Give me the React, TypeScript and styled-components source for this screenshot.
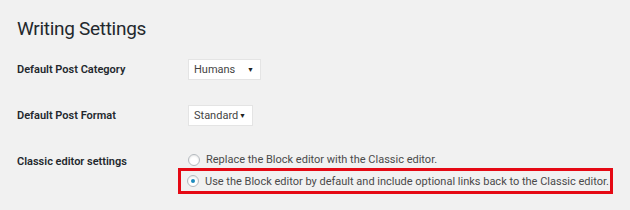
import React from "react";
import styled, { createGlobalStyle } from "styled-components";

const Global = createGlobalStyle`
  html, body { margin: 0; padding: 0; background: #f1f1f1; }
  body { font-family: Roboto, "Open Sans", sans-serif; color: #23282d; }
`;

const Page = styled.div`
  width: 630px;
  height: 210px;
  padding: 16px 0 0 17px;
  box-sizing: border-box;
  overflow: hidden;
`;

const Title = styled.h1`
  margin: 0 0 17px 0;
  font-family: Roboto, sans-serif;
  font-size: 19px;
  font-weight: 400;
  letter-spacing: -0.3px;
  line-height: 26px;
  color: #23282d;
`;

const Form = styled.div`
  display: grid;
  grid-template-columns: 171px 1fr;
  row-gap: 25px;
  align-items: start;
`;

const Label = styled.div`
  font-size: 11px;
  font-weight: 600;
  line-height: 21px;
  color: #23282d;
`;

const Select = styled.div<{ $w: number }>`
  width: ${(p) => p.$w}px;
  height: 21px;
  box-sizing: border-box;
  background: #fff;
  border: 1px solid #e4e4e4;
  display: flex;
  align-items: center;
  justify-content: space-between;
  padding: 0 6px 0 5px;
  font-size: 11px;
  color: #444;
`;

const Arrow = styled.span`
  font-size: 7px;
  color: #222;
`;

const Options = styled.div`
  display: flex;
  flex-direction: column;
`;

const Option = styled.label<{ $highlight?: boolean }>`
  display: flex;
  align-items: center;
  gap: 6px;
  font-size: 11px;
  line-height: 17px;
  color: #4a4a4a;
  white-space: nowrap;
  ${(p) =>
    p.$highlight
      ? `
    width: 435px;
    height: 26px;
    box-sizing: border-box;
    border: 3px solid #e50914;
    margin-left: -10px;
    padding-left: 6px;
  `
      : ""}
`;

const Radio = styled.span<{ $checked?: boolean }>`
  width: 12px;
  height: 12px;
  box-sizing: border-box;
  border-radius: 50%;
  border: 1px solid #b4b9be;
  background: #fff;
  box-shadow: inset 0 1px 2px rgba(0, 0, 0, 0.1);
  display: flex;
  align-items: center;
  justify-content: center;
  flex: none;
  &::after {
    content: "";
    display: ${(p) => (p.$checked ? "block" : "none")};
    width: 4px;
    height: 4px;
    border-radius: 50%;
    background: #1e8cbe;
  }
`;

export default function App() {
  return (
    <>
      <Global />
      <Page>
        <Title>Writing Settings</Title>
        <Form>
          <Label>Default Post Category</Label>
          <Select $w={73}>
            Humans <Arrow>▼</Arrow>
          </Select>
          <Label>Default Post Format</Label>
          <Select $w={65}>
            Standard <Arrow>▼</Arrow>
          </Select>
          <Label>Classic editor settings</Label>
          <Options>
            <Option>
              <Radio />
              Replace the Block editor with the Classic editor.
            </Option>
            <Option $highlight>
              <Radio $checked />
              Use the Block editor by default and include optional links back to the Classic editor.
            </Option>
          </Options>
        </Form>
      </Page>
    </>
  );
}
